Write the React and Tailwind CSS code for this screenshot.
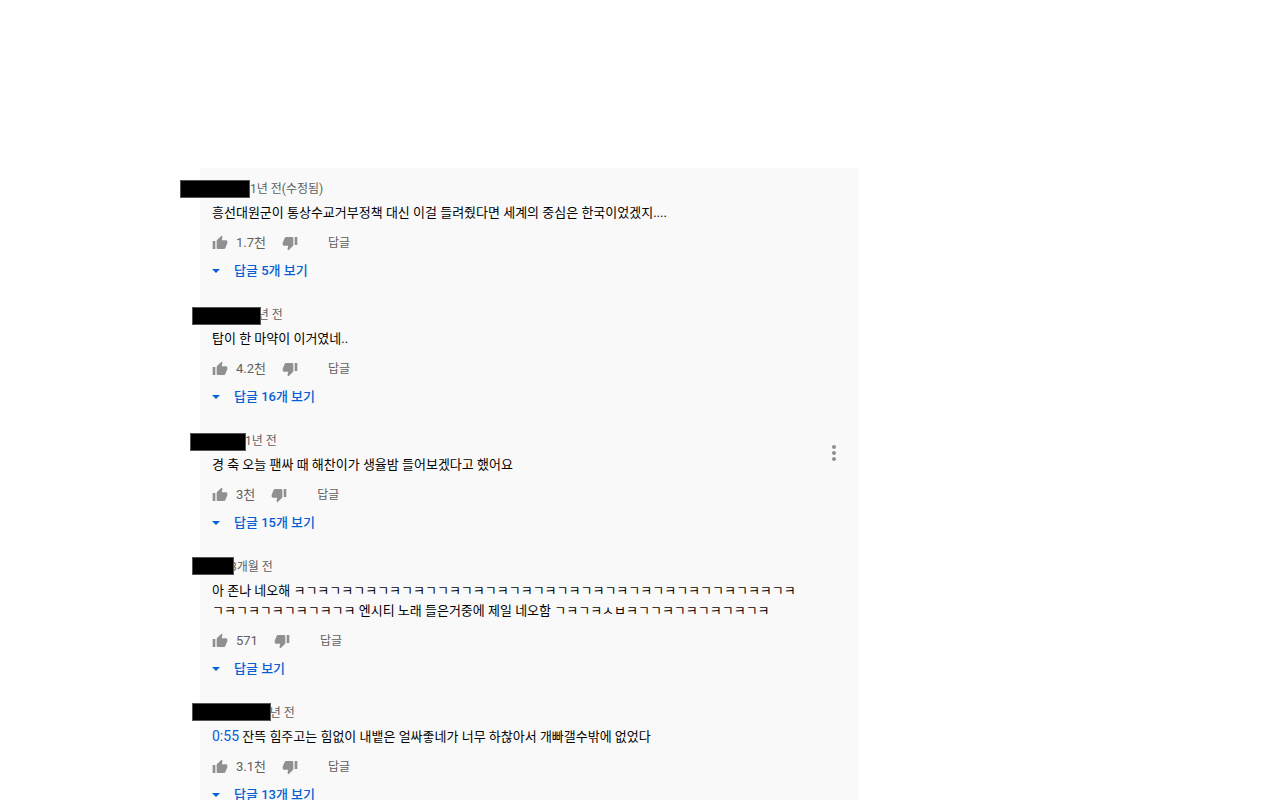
import React from 'react';
import clsx from 'clsx';

const comments = [
  {
    id: 1,
    bar: '-ml-8 w-[70px] self-center',
    time: '1년 전(수정됨)',
    text: '흥선대원군이 통상수교거부정책 대신 이걸 들려줬다면 세계의 중심은 한국이었겠지....',
    likes: '1.7천',
    replies: '답글 5개 보기',
  },
  {
    id: 2,
    bar: '-ml-5 -mr-2.5 w-[69px] self-end',
    time: '1년 전',
    text: '탑이 한 마약이 이거였네..',
    likes: '4.2천',
    replies: '답글 16개 보기',
  },
  {
    id: 3,
    bar: '-ml-[22px] -mr-px w-14 self-end',
    time: '1년 전',
    text: '경 축 오늘 팬싸 때 해찬이가 생율밤 들어보겠다고 했어요',
    likes: '3천',
    replies: '답글 15개 보기',
    showMenu: true,
  },
  {
    id: 4,
    bar: '-ml-5 -mr-1 w-[42px] self-start',
    time: '3개월 전',
    text: '아 존나 네오해 ㅋㄱㅋㄱㅋㄱㅋㄱㅋㄱㅋㄱㄱㅋㄱㅋㄱㅋㄱㅋㄱㅋㄱㅋㄱㅋㄱㅋㄱㅋㄱㅋㄱㅋㄱㄱㅋㄱㅋㅋㄱㅋㄱㅋㄱㅋㄱㅋㄱㅋㄱㅋㄱㅋ 엔시티 노래 들은거중에 제일 네오함 ㄱㅋㄱㅋㅅㅂㅋㄱㄱㅋㄱㅋㄱㅋㄱㅋㄱㅋ',
    likes: '571',
    replies: '답글 보기',
  },
  {
    id: 5,
    bar: '-ml-5 -mr-2 w-[79px] self-start',
    time: '1년 전',
    timestamp: '0:55',
    text: '잔뜩 힘주고는 힘없이 내뱉은 얼싸좋네가 너무 하찮아서 개빠갤수밖에 없었다',
    likes: '3.1천',
    replies: '답글 13개 보기',
  },
];

const Icon = ({ path, className }) => (
  <svg viewBox="0 0 24 24" fill="currentColor" className={className} aria-hidden="true">
    <path d={path} />
  </svg>
);

const LIKE =
  'M1 21h4V9H1v12zm22-11c0-1.1-.9-2-2-2h-6.31l.95-4.57.03-.32c0-.41-.17-.79-.44-1.06L14.17 1 7.59 7.59C7.22 7.95 7 8.45 7 9v10c0 1.1.9 2 2 2h9c.83 0 1.54-.5 1.84-1.22l3.02-7.05c.09-.23.14-.47.14-.73v-2z';
const DISLIKE =
  'M15 3H6c-.83 0-1.54.5-1.84 1.22l-3.02 7.05c-.09.23-.14.47-.14.73v2c0 1.1.9 2 2 2h6.31l-.95 4.57-.03.32c0 .41.17.79.44 1.06L9.83 23l6.59-6.59c.36-.36.58-.86.58-1.41V5c0-1.1-.9-2-2-2zm4 0v12h4V3h-4z';
const MORE =
  'M12 8c1.1 0 2-.9 2-2s-.9-2-2-2-2 .9-2 2 .9 2 2 2zm0 2c-1.1 0-2 .9-2 2s.9 2 2 2 2-.9 2-2-.9-2-2-2zm0 6c-1.1 0-2 .9-2 2s.9 2 2 2 2-.9 2-2-.9-2-2-2z';

const Comment = ({ comment }) => {
  return (
    <article className="flex gap-4 pb-[22px]">
      <div className="min-w-0 flex-1">
        <header className="flex h-5 items-center text-[12px] leading-5 text-[#606060]">
          {/* author name is blacked out */}
          <span className={clsx('z-10 h-[18px] shrink-0 border border-[#555] bg-black', comment.bar)} />
          <time>{comment.time}</time>
        </header>

        <p className="mt-1 text-[13px] leading-5 text-[#030303]">
          {comment.timestamp && (
            <>
              <a href="#t=55" className="text-[14px] leading-none text-[#065fd4]">{comment.timestamp}</a>{' '}
            </>
          )}
          {comment.text}
        </p>

        <div className="mt-1 flex h-8 items-center text-[12px] text-[#606060]">
          <button type="button" aria-label="좋아요" className="text-[#909090]">
            <Icon path={LIKE} className="h-4 w-4" />
          </button>
          <span className="ml-2 text-[13px]">{comment.likes}</span>
          <button type="button" aria-label="싫어요" className="ml-4 text-[#909090]">
            <Icon path={DISLIKE} className="h-4 w-4" />
          </button>
          <button type="button" className="ml-[30px]">답글</button>
        </div>

        <button type="button" className="flex h-6 items-center gap-3.5 text-[13px] font-medium text-[#065fd4]">
          <svg viewBox="0 0 8 4" fill="currentColor" className="h-1 w-2" aria-hidden="true">
            <path d="M0 0h8L4 4z" />
          </svg>
          {comment.replies}
        </button>
      </div>

      <div className="w-6 shrink-0">
        {comment.showMenu && (
          <button type="button" aria-label="작업 메뉴" className="mt-2.5 text-[#909090]">
            <Icon path={MORE} className="h-6 w-6" />
          </button>
        )}
      </div>
    </article>
  );
};

const App = () => {
  return (
    <main className="min-h-screen bg-white pt-[168px] pl-[200px] font-[Roboto,'Noto_Sans_CJK_KR',sans-serif]">
      <section className="max-w-[659px] bg-[#f9f9f9] pt-[11px] pr-[13px] pl-3">
        {comments.map((comment) => (
          <Comment key={comment.id} comment={comment} />
        ))}
      </section>
    </main>
  );
};

export default App;
